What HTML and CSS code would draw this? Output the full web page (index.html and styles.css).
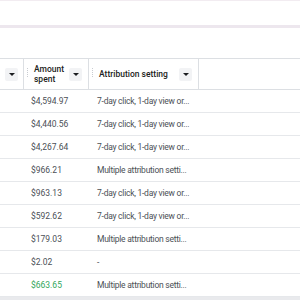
FILE: index.html
```html
<!DOCTYPE html>
<html>
<head>
<meta charset="utf-8">
<link rel="stylesheet" href="styles.css">
</head>
<body>
<div class="page">
  <div class="topbar"></div>
  <div class="spacer"></div>
  <div class="table">
    <div class="row head">
      <div class="cell hcell first">
        <span class="fill"></span>
        <button class="drop"><span class="caret"></span></button>
      </div>
      <div class="cell hcell">
        <span class="handle"></span>
        <span class="htext">Amount<br>spent</span>
        <button class="drop"><span class="caret"></span></button>
      </div>
      <div class="cell hcell">
        <span class="handle"></span>
        <span class="htext">Attribution setting</span>
        <button class="drop"><span class="caret"></span></button>
      </div>
      <div class="cell hcell last"></div>
    </div>
    <div class="row"><div class="cell"></div><div class="cell num">$4,594.97</div><div class="cell txt">7-day click, 1-day view or...</div><div class="cell"></div></div>
    <div class="row"><div class="cell"></div><div class="cell num">$4,440.56</div><div class="cell txt">7-day click, 1-day view or...</div><div class="cell"></div></div>
    <div class="row"><div class="cell"></div><div class="cell num">$4,267.64</div><div class="cell txt">7-day click, 1-day view or...</div><div class="cell"></div></div>
    <div class="row"><div class="cell"></div><div class="cell num">$966.21</div><div class="cell txt">Multiple attribution setti...</div><div class="cell"></div></div>
    <div class="row"><div class="cell"></div><div class="cell num">$963.13</div><div class="cell txt">7-day click, 1-day view or...</div><div class="cell"></div></div>
    <div class="row"><div class="cell"></div><div class="cell num">$592.62</div><div class="cell txt">7-day click, 1-day view or...</div><div class="cell"></div></div>
    <div class="row"><div class="cell"></div><div class="cell num">$179.03</div><div class="cell txt">Multiple attribution setti...</div><div class="cell"></div></div>
    <div class="row"><div class="cell"></div><div class="cell num">$2.02</div><div class="cell txt">-</div><div class="cell"></div></div>
    <div class="row"><div class="cell"></div><div class="cell num green">$663.65</div><div class="cell txt">Multiple attribution setti...</div><div class="cell"></div></div>
    <div class="footer"></div>
  </div>
</div>
</body>
</html>
```
FILE: styles.css
```css
html, body {
  margin: 0;
  padding: 0;
  background: #fff;
}
body {
  font-family: Roboto, "Liberation Sans", Arial, sans-serif;
  color: #4b4f56;
  width: 300px;
  height: 300px;
  overflow: hidden;
}
.topbar {
  height: 25px;
  border-top: 1px solid #f2ecf1;
  box-sizing: border-box;
}
.spacer {
  height: 33px;
  border-top: 3px solid #ede7ee;
  box-sizing: border-box;
}
.table {
  display: flex;
  flex-direction: column;
}
.row {
  display: grid;
  grid-template-columns: 24px 65px 110px 1fr;
  height: 23px;
  border-bottom: 1px solid #e6e8eb;
  box-sizing: border-box;
  align-items: center;
}
.row.head {
  height: 32px;
  border-top: 1px solid #dcdfe3;
  border-bottom: 1px solid #dcdfe3;
  align-items: stretch;
}
.cell {
  font-size: 8.5px;
  white-space: nowrap;
  min-width: 0;
}
.hcell {
  display: flex;
  align-items: center;
  border-right: 1px solid #dcdfe3;
  padding: 0 6px 0 3px;
}
.hcell.first {
  padding-left: 5px;
}
.hcell.last {
  border-right: none;
}
.fill {
  flex: 1;
}
.handle {
  width: 1px;
  height: 9px;
  margin-right: 6px;
  margin-top: -4px;
  background-image: linear-gradient(#c9ccd1 50%, transparent 50%);
  background-size: 1px 2px;
}
.htext {
  flex: 1;
  font-weight: 500;
  color: #1c1e21;
  line-height: 10px;
  font-size: 8.5px;
  white-space: normal;
}
.drop {
  width: 13px;
  height: 13px;
  border: none;
  padding: 0;
  margin: 0;
  background: #f2f3f5;
  border-radius: 2px;
  display: flex;
  align-items: center;
  justify-content: center;
  flex: none;
}
.caret {
  width: 0;
  height: 0;
  border-left: 3px solid transparent;
  border-right: 3px solid transparent;
  border-top: 3px solid #1c1e21;
}
.num {
  padding-left: 7px;
}
.txt {
  padding-left: 8px;
  letter-spacing: -0.25px;
}
.green {
  color: #31a65a;
}
.footer {
  height: 6px;
  background: #e9eaed;
}
```
